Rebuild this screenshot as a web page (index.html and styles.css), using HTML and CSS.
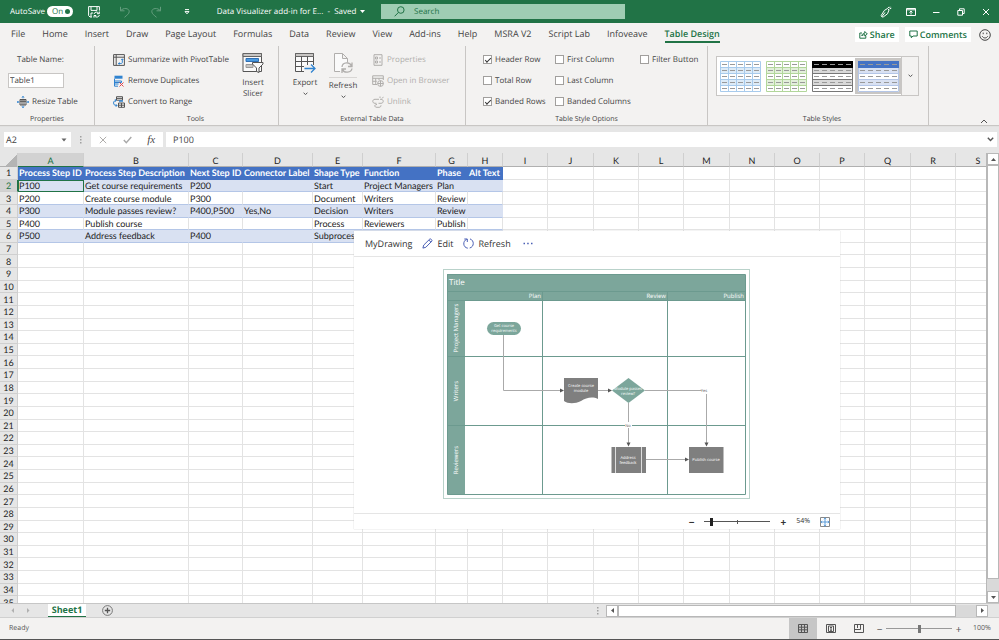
FILE: index.html
```html
<!DOCTYPE html>
<html lang="en">
<head>
  <meta charset="UTF-8">
  <meta name="viewport" content="width=device-width, initial-scale=1">
  <title>Data Visualizer add-in for Excel</title>
  <link rel="stylesheet" href="styles.css">
</head>
<body>
  <header class="titlebar">
    <div class="quick">
      <label for="autosave">AutoSave</label>
      <span class="toggle"><input type="checkbox" id="autosave" checked><span class="toggle-text">On</span></span>
      <button class="tb save" aria-label="Save">
        <svg width="12" height="12" viewBox="0 0 12 12"><path d="M4 11H2L.6 9.6V.6h10.800v4M3 .6v3.800h6V.6M3 11V7h2"/><path d="M6 8a2.600 2.600 0 0 1 4.800-.6M11.300 5.500v2.200H9M11.400 9a2.600 2.600 0 0 1-4.800.8M6 11.600V9.500h2.200"/></svg>
      </button>
      <button class="tb dim undo" aria-label="Undo">
        <svg width="12" height="12" viewBox="0 0 12 12"><path d="M1.500.8v4h4M1.700 4.700C4 1.500 10.500 1.800 10.200 5.800 10 8 8 9 5.500 11.300"/></svg>
      </button>
      <button class="tb dim" aria-label="Redo">
        <svg width="12" height="12" viewBox="0 0 12 12"><path d="M10.500.8v4h-4M10.300 4.700C8 1.500 1.500 1.800 1.800 5.800 2 8 4 9 6.500 11.300"/></svg>
      </button>
      <button class="tb more" aria-label="Customize toolbar">
        <svg width="6" height="6" viewBox="0 0 6 6"><path d="M1 .6h4M1 2.600h4L3 4.800z"/></svg>
      </button>
    </div>
    <button class="doc">Data Visualizer add-in for E... &nbsp;- &nbsp;Saved <svg width="5" height="4" viewBox="0 0 5 4"><path d="M0 0h5L2.500 3z" fill="#fff"/></svg></button>
    <div class="search">
      <svg width="11" height="11" viewBox="0 0 11 11"><circle cx="6.800" cy="4" r="3.300"/><path d="M4.400 6.500L.6 10.300"/></svg>
      <input type="text" aria-label="Search" placeholder="Search">
    </div>
    <div class="window">
      <button class="tb" aria-label="Pen">
        <svg width="12" height="12" viewBox="0 0 12 12"><path d="M2 11l-.8-1.500L4.300 4.500 7.500 2.500 9 4 7.500 7.800 3.300 10.900zM2 10.500l3-4M8 2L9 .8M9.500 3l1.800-.8M9.600 1.800l.8-1"/></svg>
      </button>
      <button class="tb" aria-label="Ribbon display options">
        <svg width="10" height="8" viewBox="0 0 10 8"><path d="M.5.5h9v7h-9zM.5 1.800h9M5 6.500V3M3.500 4.500L5 3l1.500 1.500"/></svg>
      </button>
      <button class="tb" aria-label="Minimize"><svg width="8" height="8" viewBox="0 0 8 8"><path d="M1 4.500h6.500"/></svg></button>
      <button class="tb" aria-label="Restore"><svg width="8" height="8" viewBox="0 0 8 8"><path d="M.8 2.500h4.700v4.700H.8zM2.500 2.500V.8h4.700v4.700H5.500"/></svg></button>
      <button class="tb" aria-label="Close"><svg width="8" height="8" viewBox="0 0 8 8"><path d="M1 1l6 6M7 1L1 7"/></svg></button>
    </div>
  </header>

  <nav class="tabs">
    <a href="#">File</a><a href="#">Home</a><a href="#">Insert</a><a href="#">Draw</a><a href="#">Page Layout</a><a href="#">Formulas</a><a href="#">Data</a><a href="#">Review</a><a href="#">View</a><a href="#">Add-ins</a><a href="#">Help</a><a href="#">MSRA V2</a><a href="#">Script Lab</a><a href="#">Infoveave</a><a href="#" class="active">Table Design</a>
    <div class="tab-actions">
      <button><svg width="9" height="9" viewBox="0 0 9 9"><path d="M3 3H.8v5.200h6V6M2.800 6c.2-2 1.500-2.800 3-2.800V1.500L8.300 4 5.800 6V4.600C4.500 4.600 3.500 5 2.800 6z"/></svg>Share</button>
      <button><svg width="9" height="9" viewBox="0 0 9 9"><path d="M.8 1h7.400v5H4L2.300 7.800V6H.8z"/></svg>Comments</button>
      <svg class="smile" width="12" height="12" viewBox="0 0 12 12"><circle cx="6" cy="6" r="5.300"/><path d="M3.300 7.300c1 2.200 4.400 2.200 5.400 0M4.200 3.600v1.600M7.800 3.600v1.600"/></svg>
    </div>
  </nav>

  <section class="ribbon">
    <div class="group g-props">
      <div class="rows">
        <label for="tname" class="indent">Table Name:</label>
        <input type="text" id="tname" class="tname" value="Table1">
        <button class="cmd indent">
          <svg width="12" height="12" viewBox="0 0 12 12"><path class="k" d="M3 3.500h6v5.500H3zM3 5.300h6M5 3.500V9M7 3.500V9"/><path class="b" d="M6 .3v2M6 9.700v2M.4 6h2M9.600 6h2M5 1.400l1-1 1 1M5 10.700l1 1 1-1M1.300 5l-1 1 1 1M10.700 5l1 1-1 1"/></svg>
          Resize Table
        </button>
      </div>
      <span class="caption">Properties</span>
    </div>

    <div class="group g-tools">
      <div class="cols">
        <div class="rows">
          <button class="cmd">
            <svg width="12" height="12" viewBox="0 0 12 12"><path class="k" d="M.6.600h10.800v10.800H.6zM.6 3.200h10.800M3.200.6v10.800"/><path class="b" d="M9.300 5v3.500c0 1-.7 1-1.500 1H5.500M8.300 6l1-1.200 1 1.200M6.500 8.500L5.300 9.600l1.200 1"/></svg>
            Summarize with PivotTable
          </button>
          <button class="cmd">
            <svg width="12" height="12" viewBox="0 0 12 12"><path d="M1.500.7h8v3h-8z" fill="#2f83d0"/><path class="b" d="M1.500 3.700v7.500h3.500M1.500 6h7v1.500h-7M1.500 9h4"/><path d="M6.500 7.500l4 4M10.500 7.500l-4 4" stroke="#e0474c"/></svg>
            Remove Duplicates
          </button>
          <button class="cmd">
            <svg width="12" height="12" viewBox="0 0 12 12"><path class="k" d="M3.500.7h6v3.500h-6zM3.500 2.400h6M5.500 7h6v4.300h-6zM5.500 9.200h6M8.500 7v4.300"/><path class="b" d="M3 4.500C.5 4.500.3 7 .8 8c.5 1.500 2 1.500 3.200 1.500M2.800 8.200L4 9.500 2.800 10.800M2 3.200l1.200 1.300L2 5.800"/><path d="M6 5h4" stroke="#2f83d0" stroke-width="1.500"/></svg>
            Convert to Range
          </button>
        </div>
        <button class="big slicer">
          <svg width="22" height="22" viewBox="0 0 22 22"><path class="k w" d="M1 1.500h18.500v18H1z"/><path d="M1 1.500h18.500v3H1z" fill="#c8c6c4" stroke="#666"/><path d="M4 6.500h12.500v3H4z" fill="#4a9be0" stroke="#2f6fb5"/><path d="M4 12.500h7v3H4z" fill="#c8c6c4" stroke="#999"/><path class="k w" d="M10.500 10.500h10.500v1.500l-4 4v4.500l-2.500-1v-3.500l-4-4z"/></svg>
          Insert<br>Slicer
        </button>
      </div>
      <span class="caption">Tools</span>
    </div>

    <div class="group g-ext">
      <div class="cols">
        <button class="big">
          <svg width="22" height="22" viewBox="0 0 22 22"><path class="k w" d="M1.500 1.500h18v18h-18z"/><path d="M1.500 1.500h18v3h-18z" fill="#c8c6c4" stroke="#666"/><path class="k" d="M1.500 9.500h18M1.500 14.500h18M7.500 4.500v15M13.500 4.500v15"/><path d="M10 13h11.500v7H10z" fill="#f3f2f1"/><path class="b" stroke-width="1.300" d="M10.500 16.500h10M17 12.500l4 4-4 4"/></svg>
          Export
          <svg class="chev" width="5" height="4" viewBox="0 0 5 4"><path class="k" d="M.6.8l1.900 1.700L4.400.8"/></svg>
        </button>
        <button class="big refresh">
          <svg width="22" height="22" viewBox="0 0 22 22"><path class="g w" d="M8 19.500H2.500v-18h8l5 5v4M10.500 1.500v5h5"/><path class="g" stroke-width="1.300" d="M10 15c.5-5 8-5.500 9.500-1M20 10.500v4h-4M20 16.500c-.8 4.500-8 5-9.300 1M10 21v-4h4"/></svg>
          <span>Refresh</span>
          <svg class="chev" width="5" height="4" viewBox="0 0 5 4"><path class="k" d="M.6.8l1.900 1.700L4.400.8"/></svg>
        </button>
        <div class="rows">
          <button class="cmd" disabled>
            <svg width="12" height="12" viewBox="0 0 12 12"><path class="g" d="M2 .7h8v10.600H2zM3.500 3h2v2h-2zM3.500 7h2v2h-2zM7 4h2M7 8h2"/></svg>
            Properties
          </button>
          <button class="cmd" disabled>
            <svg width="12" height="12" viewBox="0 0 12 12"><path class="g" d="M5 9.500H.7V.8h10.600V5M.7 3.300h10.600M.7 6.300h4M3.700 3.300v6M7 3.300V5"/><circle class="g" cx="8.500" cy="8.500" r="2.900"/><path class="g" d="M5.600 8.500h5.800M8.500 5.600v5.800"/></svg>
            Open in Browser
          </button>
          <button class="cmd" disabled>
            <svg width="12" height="12" viewBox="0 0 12 12"><path class="g" d="M7 3.300H3c-3 0-3 4 0 4h1.500M8 3.300h1c3 0 3 4 0 4H6.500M5 8.500c-3 0-3 2.800 0 2.800h2c1.500 0 2-1 2-2M8 2V.5M10 2.500L11.500.8"/></svg>
            Unlink
          </button>
        </div>
      </div>
      <span class="caption">External Table Data</span>
    </div>

    <div class="group g-opts">
      <div class="checks">
        <label><input type="checkbox" checked>Header Row</label>
        <label><input type="checkbox">First Column</label>
        <label><input type="checkbox">Filter Button</label>
        <label><input type="checkbox">Total Row</label>
        <label><input type="checkbox">Last Column</label>
        <span></span>
        <label><input type="checkbox" checked>Banded Rows</label>
        <label><input type="checkbox">Banded Columns</label>
      </div>
      <span class="caption">Table Style Options</span>
    </div>

    <div class="group g-styles">
      <svg class="defs" width="0" height="0">
        <symbol id="dashes" viewBox="0 0 41 31"><path d="M2 3.500h37M2 9.500h37M2 15.500h37M2 21.500h37M2 27.500h37" stroke="#999" stroke-dasharray="5 3" fill="none"/></symbol>
      </svg>
      <div class="gallery-row">
        <div class="gallery">
          <button class="swatch" aria-label="Blue outline style"><svg width="41" height="31" viewBox="0 0 41 31"><path d="M0 6h41v6H0zM0 18h41v6H0z" fill="#ddebf7"/><path d="M.5.5h40v30H.5zM0 6.500h41M0 12.500h41M0 18.500h41M0 24.500h41M8.500 0v31M16.500 0v31M24.500 0v31M32.500 0v31" stroke="#a8cbec" fill="none"/><use href="#dashes" width="41" height="31"/></svg></button>
          <button class="swatch" aria-label="Green outline style"><svg width="41" height="31" viewBox="0 0 41 31"><path d="M0 6h41v6H0zM0 18h41v6H0z" fill="#e2efda"/><path d="M.5.5h40v30H.5zM0 6.500h41M0 12.500h41M0 18.500h41M0 24.500h41M8.500 0v31M16.500 0v31M24.500 0v31M32.500 0v31" stroke="#b2d69b" fill="none"/><use href="#dashes" width="41" height="31"/></svg></button>
          <button class="swatch" aria-label="Black style"><svg width="41" height="31" viewBox="0 0 41 31"><path d="M0 6h41v6H0zM0 18h41v6H0z" fill="#d9d9d9"/><path d="M.5.5h40v30H.5zM0 12.500h41M0 18.500h41M0 24.500h41" stroke="#777" fill="none"/><path d="M0 0h41v7H0z" fill="#000"/><use href="#dashes" width="41" height="31"/></svg></button>
          <button class="swatch selected" aria-label="Blue style"><svg width="41" height="31" viewBox="0 0 41 31"><path d="M0 0h41v31H0z" fill="#fff"/><path d="M0 6h41v6H0zM0 18h41v6H0z" fill="#d9e1f2"/><path d="M.5.5h40v30H.5zM0 12.500h41M0 18.500h41M0 24.500h41" stroke="#b4c6e7" fill="none"/><path d="M0 0h41v7H0z" fill="#4472c4"/><use href="#dashes" width="41" height="31"/></svg></button>
        </div>
        <button class="gallery-more" aria-label="More styles"><svg width="5" height="4" viewBox="0 0 5 4"><path class="k" d="M.6.8l1.900 1.700L4.400.8"/></svg></button>
      </div>
      <span class="caption">Table Styles</span>
    </div>

    <button class="collapse" aria-label="Collapse ribbon"><svg width="8" height="5" viewBox="0 0 8 5"><path class="k" d="M1 4l3-3 3 3"/></svg></button>
  </section>

  <section class="formula">
    <button class="namebox">A2<svg width="6" height="4" viewBox="0 0 6 4"><path d="M.5.5h5L3 3.500z" fill="#666"/></svg></button>
    <svg class="grip" width="2" height="8" viewBox="0 0 2 8"><path d="M0 0h1.500v1.500H0zM0 3h1.500v1.500H0zM0 6h1.500v1.500H0z" fill="#a0a0a0"/></svg>
    <div class="fx">
      <button aria-label="Cancel"><svg width="8" height="8" viewBox="0 0 8 8"><path class="g" d="M.8.800l6.400 6.400M7.200.8L.8 7.200"/></svg></button>
      <button aria-label="Enter"><svg width="9" height="8" viewBox="0 0 9 8"><path d="M.8 4l2.500 2.800L8.300 1" stroke="#a8a8a8" stroke-width="1.400"/></svg></button>
      <button class="fn" aria-label="Insert function">fx</button>
    </div>
    <div class="finput">
      <input type="text" aria-label="Formula" value="P100">
      <svg width="7" height="5" viewBox="0 0 7 5"><path d="M.8.8l2.700 2.700L6.200.8" stroke="#555" stroke-width="1.400"/></svg>
    </div>
  </section>

  <main class="workspace">
    <div class="pane">
      <table class="sheet" id="sheet">
        <colgroup>
          <col class="c-num"><col class="c-a"><col class="c-b"><col class="c-c"><col class="c-d"><col class="c-e"><col class="c-f"><col class="c-g"><col class="c-h"><col class="c-std"><col class="c-wide"><col class="c-std"><col class="c-std"><col class="c-wide"><col class="c-std"><col class="c-std"><col class="c-std"><col class="c-wide"><col class="c-std"><col class="c-std">
        </colgroup>
        <thead></thead>
        <tbody></tbody>
      </table>

      <div class="addin">
        <div class="addin-bar">
          <span class="name">MyDrawing</span>
          <button><svg width="11" height="11" viewBox="0 0 11 11"><path d="M.9 10.100l.8-3L7.800 1c.7-.7 2.800 1.300 2.100 2.100L3.800 9.300zM6.800 2l2.100 2.100"/></svg>Edit</button>
          <button><svg width="11" height="11" viewBox="0 0 11 11"><path d="M7 .9c4.500 1.500 4.300 8-.3 9.100M4.800 10.200C-.2 9.500-.5 3 3.700 1.300M1.300 1h3v3"/></svg>Refresh</button>
          <button class="dots" aria-label="More"><svg width="10" height="3" viewBox="0 0 10 3"><path d="M.5.800h1.500v1.500H.5zM4.200.8h1.500v1.500H4.200zM8 .8h1.500v1.500H8z" fill="#4a5fb5" stroke="none"/></svg></button>
        </div>
        <div class="canvas">
          <svg class="diagram" width="307" height="230" viewBox="0 0 307 230">
            <rect x=".5" y=".5" width="306" height="229" fill="#fff" stroke="#b9d2ca"/>
            <path d="M4 5h298v26H4zM4 5h18v220H4z" fill="#7ca69b"/>
            <path class="lane" d="M4.500 5.500h298v220h-298zM4 22.500h298M4 31.500h298M99.500 22v203M224.500 22v203M4 87.500h298M4 156.500h298"/>
            <text class="t8" x="6" y="16">Title</text>
            <text class="t6" x="98" y="29" text-anchor="end">Plan</text>
            <text class="t6" x="223" y="29" text-anchor="end">Review</text>
            <text class="t6" x="301" y="29" text-anchor="end">Publish</text>
            <text class="t6" transform="translate(15 59) rotate(-90)" text-anchor="middle">Project Managers</text>
            <text class="t6" transform="translate(15 122) rotate(-90)" text-anchor="middle">Writers</text>
            <text class="t6" transform="translate(15 191) rotate(-90)" text-anchor="middle">Reviewers</text>
            <path class="wire" d="M60.500 66v55.500H118M155 121.500h11M202 121.500h61.500V174M185.500 134v40M203 190.500h40"/>
            <path d="M117 119.500l4 2-4 2zM165 119.500l4 2-4 2zM261.500 173.500h4l-2 4zM183.500 173.500h4l-2 4zM242 188.500l4 2-4 2z" fill="#555"/>
            <path d="M258 118h7v7h-7zM182 153h7v6h-7z" fill="#fff"/>
            <rect x="44" y="53" width="34" height="13" rx="6.500" fill="#7ca69b"/>
            <path d="M121 109h34v21c-6-3-12-1-17 2-6 3-13 3-17 0z" fill="#7f7f7f"/>
            <path d="M185.500 109l16.500 12.500-16.500 12.500-16.500-12.500z" fill="#7ca69b"/>
            <path d="M168.500 178h34.500v26h-34.500zM246 178h34.500v26H246z" fill="#7f7f7f"/>
            <path d="M172.500 178v26M198.500 178v26" stroke="#ddd"/>
            <g class="t4" text-anchor="middle">
              <text x="61" y="58">Get course</text><text x="61" y="63">requirements</text>
              <text x="138" y="118">Create course</text><text x="138" y="123">module</text>
              <text x="185" y="121">Module passes</text><text x="185" y="126">review?</text>
              <text x="185" y="190">Address</text><text x="185" y="195">feedback</text>
              <text x="263" y="192">Publish course</text>
              <text class="dark" x="261" y="123">Yes</text><text class="dark" x="185" y="158">No</text>
            </g>
          </svg>
        </div>
        <div class="addin-zoom">
          <button aria-label="Zoom out">−</button>
          <input type="range" aria-label="Drawing zoom" min="0" max="100" value="8" class="range dark-range">
          <button aria-label="Zoom in">+</button>
          <span>54%</span>
          <button aria-label="Fit"><svg width="10" height="10" viewBox="0 0 10 10"><path d="M.5.5h9v9h-9z" stroke="#888"/><path d="M5 1v8M1 5h8M3.800 2L5 .9 6.200 2M3.800 8L5 9.100 6.200 8M2 3.800L.9 5 2 6.200M8 3.800L9.100 5 8 6.200" stroke="#5a9bd8"/></svg></button>
        </div>
      </div>
    </div>
    <div class="vscroll">
      <button aria-label="Scroll up"><svg width="5" height="3" viewBox="0 0 5 3"><path d="M0 3h5L2.500 0z" fill="#555"/></svg></button>
      <div class="thumb"></div>
      <div class="gap"></div>
      <button aria-label="Scroll down"><svg width="5" height="3" viewBox="0 0 5 3"><path d="M0 0h5L2.500 3z" fill="#555"/></svg></button>
    </div>
  </main>

  <div class="sheetbar">
    <button class="arrow" aria-label="Previous sheet"><svg width="4" height="5" viewBox="0 0 4 5"><path d="M3 0v5L.5 2.500z" fill="#b0b0b0"/></svg></button>
    <button class="arrow" aria-label="Next sheet"><svg width="4" height="5" viewBox="0 0 4 5"><path d="M1 0v5l2.500-2.500z" fill="#b0b0b0"/></svg></button>
    <a href="#sheet" class="sheet-tab">Sheet1</a>
    <button class="add" aria-label="New sheet"><svg width="11" height="11" viewBox="0 0 11 11"><circle cx="5.500" cy="5.500" r="4.900" stroke="#777"/><path d="M5.500 2.800v5.400M2.800 5.500h5.400" stroke="#555" stroke-width="1.300"/></svg></button>
    <svg class="grip" width="2" height="8" viewBox="0 0 2 8"><path d="M0 0h1.500v1.500H0zM0 3h1.500v1.500H0zM0 6h1.500v1.500H0z" fill="#a0a0a0"/></svg>
    <div class="hscroll">
      <button aria-label="Scroll left"><svg width="3" height="5" viewBox="0 0 3 5"><path d="M3 0v5L0 2.500z" fill="#555"/></svg></button>
      <div class="thumb"></div>
      <div class="gap"></div>
      <button aria-label="Scroll right"><svg width="3" height="5" viewBox="0 0 3 5"><path d="M0 0v5l3-2.500z" fill="#555"/></svg></button>
    </div>
  </div>

  <footer class="status">
    <span class="ready">Ready</span>
    <button class="view on" aria-label="Normal view"><svg width="10" height="9" viewBox="0 0 10 9"><path d="M.5.5h9v8h-9zM.5 3.200h9M.5 5.800h9M3.500.5v8M6.500.5v8"/></svg></button>
    <button class="view" aria-label="Page layout view"><svg width="10" height="9" viewBox="0 0 10 9"><path d="M.5.5h9v8h-9zM2.500 2h5v5.500h-5zM4 3.500h2M4 5h2M4 6.300h2"/></svg></button>
    <button class="view" aria-label="Page break preview"><svg width="10" height="9" viewBox="0 0 10 9"><path d="M.5.5h9v8h-9zM3.500.5v3.500M6.500.5v5M.5 5.500h6"/></svg></button>
    <button class="zoom" aria-label="Zoom out">−</button>
    <input type="range" aria-label="Zoom" min="0" max="100" value="50" class="range">
    <button class="zoom" aria-label="Zoom in">+</button>
    <span class="percent">100%</span>
  </footer>

  <script>
    const letters = 'ABCDEFGHIJKLMNOPQRS'.split('');
    const data = [
      ['Process Step ID', 'Process Step Description', 'Next Step ID', 'Connector Label', 'Shape Type', 'Function', 'Phase', 'Alt Text'],
      ['P100', 'Get course requirements', 'P200', '', 'Start', 'Project Managers', 'Plan', ''],
      ['P200', 'Create course module', 'P300', '', 'Document', 'Writers', 'Review', ''],
      ['P300', 'Module passes review?', 'P400,P500', 'Yes,No', 'Decision', 'Writers', 'Review', ''],
      ['P400', 'Publish course', '', '', 'Process', 'Reviewers', 'Publish', ''],
      ['P500', 'Address feedback', 'P400', '', 'Subprocess', '', '', '']
    ];

    // Append a cell with text and an optional class
    function addCell(row, tag, text, cls) {
      const cell = document.createElement(tag);
      cell.textContent = text;
      if (cls) cell.className = cls;
      row.appendChild(cell);
    }

    // Column letters
    const head = document.createElement('tr');
    addCell(head, 'th', '', 'corner');
    letters.forEach(l => addCell(head, 'th', l, l === 'A' ? 'current' : ''));
    document.querySelector('#sheet thead').appendChild(head);

    // Numbered rows, the first six hold the table
    const tbody = document.querySelector('#sheet tbody');
    for (let r = 0; r < 35; r++) {
      const row = document.createElement('tr');
      addCell(row, 'th', r + 1, r === 1 ? 'current' : '');
      letters.forEach((l, c) => {
        const inTable = r < data.length && c < 8;
        let cls = '';
        if (inTable) cls = r === 0 ? 'head' : (r % 2 ? 'band' : 'plain');
        if (r === 1 && c === 0) cls += ' selected';
        addCell(row, 'td', inTable ? data[r][c] : '', cls);
      });
      tbody.appendChild(row);
    }
  </script>
</body>
</html>
```
FILE: styles.css
```css
* { box-sizing: border-box; }
html, body { height: 100%; }
body { margin: 0; display: flex; flex-direction: column; overflow: hidden; background: #e6e6e6;
  font-family: "Open Sans", "Noto Sans", sans-serif; font-size: 8px; color: #444; text-rendering: geometricPrecision; }
button, input { font: inherit; color: inherit; text-rendering: inherit; }
button { border: 0; padding: 0; background: none; display: flex; align-items: center; justify-content: center; white-space: nowrap; }
input { min-width: 0; outline: none; }
a { color: inherit; text-decoration: none; }
svg { display: block; flex: none; fill: none; }
svg .k { stroke: #555; }
svg .b { stroke: #2f83d0; }
svg .g { stroke: #b0aeac; }
svg .w { fill: #fafafa; }

/* title bar */
.titlebar { flex: none; height: 23px; background: #217346; color: #fff; display: flex; align-items: center; }
.titlebar svg { stroke: #fff; }
.quick { display: flex; align-items: center; width: 218px; padding-left: 10px; }
.quick label { width: 37px; }
.toggle { position: relative; width: 26px; height: 11px; border-radius: 6px; background: #fff; color: #217346; }
.toggle input { appearance: none; position: absolute; right: 3px; top: 3px; width: 5px; height: 5px; margin: 0; border-radius: 50%; background: #217346; }
.toggle-text { display: block; padding-left: 5px; line-height: 11px; }
.tb { width: 25px; height: 23px; }
.quick .tb { width: 31px; }
.quick .save { margin-left: 5px; }
.dim { opacity: 0.3; }
.doc { width: 146px; }
.doc svg { margin-left: 4px; stroke: none; }
.search { margin-left: 17px; flex: 0 1 244px; height: 15px; display: flex; align-items: center; gap: 9px; padding-left: 13px; background: #9fcdb3; }
.search svg { stroke: #217346; }
.search input { flex: 1; border: 0; padding: 0; background: none; }
.search input::placeholder { color: #217346; opacity: 1; }
.window { margin-left: auto; display: flex; padding-right: 1px; }

/* tabs */
.tabs { flex: none; height: 23px; display: flex; align-items: center; gap: 17px; padding-left: 11px; background: #f3f2f1; white-space: nowrap; font-size: 9px; }
.tabs a { line-height: 15px; border-bottom: 2px solid transparent; }
.tabs .active { color: #217346; font-weight: 600; border-color: #217346; }
.tab-actions { margin-left: auto; display: flex; align-items: center; gap: 6px; padding-right: 8px; }
.tab-actions button { height: 15px; padding: 0 4px; gap: 2px; background: #fff; color: #217346; font-weight: 600; }
.tab-actions svg { stroke: #217346; }
.tab-actions .smile { stroke: #444; margin-left: 2px; }

/* ribbon */
.ribbon { flex: none; display: flex; background: #f3f2f1; box-shadow: 0 1px 1px #c8c6c4; position: relative; }
.group { display: flex; flex-direction: column; border-right: 1px solid #c8c6c4; padding-top: 3px; }
.caption { text-align: center; font-size: 7px; line-height: 10px; margin-top: 3px; }
.cols { display: flex; }
.rows { display: grid; grid-template-rows: repeat(3, 21px); align-items: center; justify-items: start; }
.cmd { gap: 3px; }
.cmd:disabled { color: #b0aeac; }
.g-props { width: 95px; }
.g-props .rows { padding-left: 8px; }
.g-props .indent { margin-left: 9px; }
.tname { width: 56px; height: 15px; border: 1px solid #c8c6c4; padding: 0 1px; background: #fff; }
.g-tools { width: 184px; padding-left: 18px; }
.big { flex-direction: column; justify-content: flex-start; line-height: 11px; padding-top: 3px; }
.big svg { margin-bottom: 3px; }
.big .chev { margin: 4px 0 0; }
.slicer { margin-left: auto; margin-right: 14px; }
.g-ext { width: 187px; }
.g-ext .cols { padding-left: 12px; }
.g-ext .big { width: 28px; }
.g-ext .refresh { margin-left: 10px; }
.refresh span { border-top: 1px solid #d8d6d4; padding-top: 2px; }
.g-ext .rows { margin-left: 15px; }
.g-opts { width: 242px; }
.checks { display: grid; grid-template-columns: 72px 85px auto; grid-template-rows: repeat(3, 21px); align-items: center; padding-left: 17px; white-space: nowrap; }
.checks label { display: flex; align-items: center; gap: 3px; }
.checks input { appearance: none; width: 9px; height: 9px; margin: 0; border: 1px solid #a19f9d; background: #fff; display: grid; place-items: center; }
.checks input:checked::before { content: ""; width: 5px; height: 2px; border-left: 1px solid #333; border-bottom: 1px solid #333; transform: rotate(-45deg); }
.g-styles { width: 221px; padding-left: 8px; }
.defs { position: absolute; }
.gallery-row { display: flex; height: 63px; padding: 7px 0 16px; }
.gallery { display: flex; background: #fff; border: 1px solid #c8c6c4; align-items: center; }
.swatch { width: 46px; height: 36px; }
.swatch.selected { background: #c8c6c4; }
.gallery-more { width: 17px; border: 1px solid #c8c6c4; border-left: 0; }
.collapse { margin-left: auto; align-self: flex-end; padding: 0 11px 1px 0; }

/* formula bar */
.formula { flex: none; display: flex; height: 28px; padding: 7px 0 6px 4px; align-items: stretch; font-size: 9px; }
.formula button, .formula input { height: 15px; }
.namebox { width: 67px; padding: 0 4px 0 2px; background: #fff; justify-content: space-between; }
.formula .grip { margin: 4px 9px; }
.fx { display: flex; justify-content: space-around; width: 72px; background: #fff; }
.fn { font: italic 11px "Liberation Serif", serif; }
.finput { flex: 1; display: flex; align-items: center; margin-left: 3px; margin-right: 2px; padding: 0 3px 0 7px; background: #fff; }
.finput input { flex: 1; border: 0; padding: 0; }

/* sheet */
.workspace { flex: 1; min-height: 0; display: flex; }
.pane { flex: 1; min-width: 0; position: relative; overflow: hidden; background: #fff; }
.sheet { table-layout: fixed; width: 1001px; height: 456px; border-collapse: separate; border-spacing: 0; font-family: Lato, sans-serif; font-size: 9px; color: #222; }
.c-num { width: 18px; }
.c-a { width: 66px; }
.c-b { width: 105px; }
.c-c { width: 54px; }
.c-d { width: 70px; }
.c-e { width: 50px; }
.c-f { width: 73px; }
.c-g { width: 32px; }
.c-h { width: 35px; }
.c-std { width: 45px; }
.c-wide { width: 46px; }
.sheet th, .sheet td { padding: 0 0 0 1px; line-height: 11px; white-space: nowrap; overflow: hidden; border-right: 1px solid #e3e3e3; border-bottom: 1px solid #e3e3e3; }
.sheet th { padding: 0; text-align: center; font-weight: normal; background: #e6e6e6; border-color: #cfcfcf; }
.sheet thead th { height: 14px; padding-top: 1px; border-bottom-color: #b0b0b0; }
.sheet th.current { background: #d2d2d2; color: #217346; border-right-color: #217346; }
.sheet thead th.current { border-right-color: #cfcfcf; border-bottom-color: #217346; }
.sheet .corner { background: linear-gradient(135deg, #e6e6e6 60%, #b4b4b4 60%); }
.sheet td.head { background: #4472c4; color: #fff; font-weight: bold; border-color: #4472c4; }
.sheet td.band { background: #d9e1f2; border-color: #d9e1f2; border-bottom-color: #b4c6e7; }
.sheet td.plain { border-bottom-color: #b4c6e7; }
.sheet td.selected { outline: 1px solid #217346; outline-offset: -1px; }

/* drawing add-in */
.addin { position: absolute; left: 354px; top: 78px; width: 486px; background: #fff; box-shadow: 0 0 1px #bbb; color: #333; }
.addin-bar { display: flex; align-items: center; gap: 10px; height: 26px; padding-left: 11px; border-bottom: 1px solid #e5e5e5; font-size: 9px; }
.addin-bar button { gap: 4px; }
.addin-bar svg { stroke: #4a5fb5; }
.dots { margin-left: 2px; }
.canvas { padding: 12px 0 14px 89px; }
.diagram { fill: #fff; }
.lane { stroke: #6c9a8f; fill: none; }
.wire { stroke: #aaa; fill: none; }
.t8 { font-size: 8px; }
.t6 { font-size: 6px; }
.t4 { font-size: 4px; }
.dark { fill: #555; }
.addin-zoom { display: flex; align-items: center; justify-content: flex-end; gap: 10px; height: 16px; padding-right: 10px; border-top: 1px solid #e5e5e5; font-size: 7px; }
.addin-zoom button { font-size: 10px; font-weight: bold; line-height: 10px; }

.range { appearance: none; width: 66px; height: 9px; margin: 0; background: linear-gradient(#999, #999) center / 100% 1px no-repeat, linear-gradient(#999, #999) center / 1px 4px no-repeat; }
.range::-webkit-slider-thumb { appearance: none; width: 3px; height: 8px; background: #777; }
.dark-range { background: linear-gradient(#555, #555) center / 100% 1px no-repeat, linear-gradient(#555, #555) center / 1px 4px no-repeat; }
.dark-range::-webkit-slider-thumb { background: #222; }

/* scroll bars */
.vscroll { flex: none; width: 13px; display: flex; flex-direction: column; background: #d9d9d9; border-left: 1px solid #b8b8b8; }
.vscroll button, .hscroll button { flex: none; width: 12px; height: 12px; background: #fff; border: 1px solid #b8b8b8; }
.thumb { flex: 1; background: #fff; border: 1px solid #b8b8b8; }
.vscroll .thumb { width: 12px; }
.vscroll .gap { height: 12px; }
.hscroll { flex: none; width: 382px; margin-right: 11px; display: flex; background: #d9d9d9; }
.hscroll .gap { width: 20px; }

.sheetbar { flex: none; height: 15px; display: flex; align-items: center; border-top: 1px solid #c6c6c6; border-bottom: 1px solid #d0d0d0; background: #e6e6e6; }
.arrow { margin-left: 11px; }
.sheet-tab { margin-left: 18px; width: 38px; text-align: center; line-height: 12px; background: #fff; color: #217346; font-size: 9px; font-weight: bold; border-bottom: 1px solid #217346; }
.add { margin-left: 16px; }
.sheetbar .grip { margin-left: auto; margin-right: 7px; }

/* status bar */
.status { flex: none; height: 22px; display: flex; align-items: center; border-bottom: 1px solid #555; background: #f3f2f1; font-size: 7px; color: #555; }
.ready { margin-left: 9px; margin-right: auto; }
.view { width: 28px; height: 21px; }
.view svg { stroke: #555; }
.view.on { background: #c6c6c6; }
.zoom { width: 13px; font-size: 10px; line-height: 10px; }
.percent { width: 34px; padding-left: 8px; }
```
